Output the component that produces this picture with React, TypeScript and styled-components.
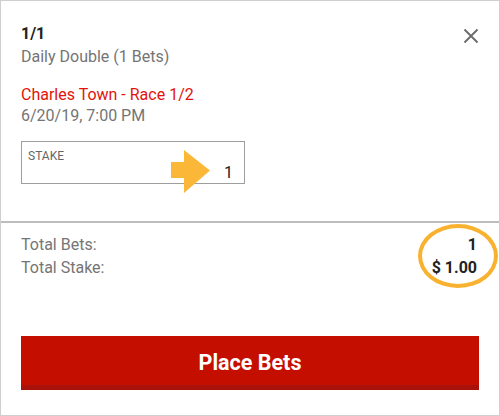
import React from 'react'
import styled, { createGlobalStyle } from 'styled-components'

const GlobalStyle = createGlobalStyle`
  html, body {
    margin: 0;
    padding: 0;
    background: #fff;
  }
  body {
    font-family: Roboto, 'Noto Sans', 'Liberation Sans', sans-serif;
    -webkit-font-smoothing: antialiased;
  }
`

const Slip = styled.div`
  position: relative;
  width: 500px;
  height: 416px;
  box-sizing: border-box;
  border: 1px solid #cfcfcf;
  display: flex;
  flex-direction: column;
  overflow: hidden;
`

const Details = styled.section`
  position: relative;
  padding: 23px 20px 37px 20px;
`

const Title = styled.div`
  font-size: 16px;
  line-height: 20px;
  font-weight: 700;
  color: #222;
`

const Muted = styled.div`
  font-size: 16px;
  line-height: 21px;
  color: #757575;
  margin-top: ${(p: { $gap?: number }) => p.$gap ?? 0}px;
`

const Race = styled.div`
  font-size: 16px;
  line-height: 21px;
  color: #e2130c;
  margin-top: 17px;
`

const CloseButton = styled.button`
  position: absolute;
  top: 26px;
  right: 19px;
  width: 18px;
  height: 18px;
  padding: 0;
  border: none;
  background: none;
  cursor: pointer;
  display: flex;
  align-items: center;
  justify-content: center;
`

const StakeBox = styled.div`
  position: relative;
  margin-top: 15px;
  width: 224px;
  height: 43px;
  box-sizing: border-box;
  border: 1px solid #9e9e9e;
  padding: 7px 11px 0 6px;
  display: flex;
  flex-direction: column;
`

const StakeLabel = styled.div`
  font-size: 12px;
  line-height: 14px;
  color: #666;
`

const StakeValue = styled.div`
  font-size: 16px;
  line-height: 18px;
  color: #222;
  text-align: right;
  margin-top: 1px;
`

const Arrow = styled.svg`
  position: absolute;
  left: 149px;
  top: 8px;
`

const Divider = styled.hr`
  margin: 0;
  border: none;
  height: 2px;
  background: #bdbdbd;
`

const Totals = styled.section`
  position: relative;
  padding: 10px 22px 0 20px;
  display: grid;
  grid-template-columns: 1fr auto;
`

const TotalLabel = styled.div`
  font-size: 16px;
  line-height: 23px;
  color: #757575;
`

const TotalValue = styled.div`
  font-size: 16px;
  line-height: 23px;
  font-weight: 700;
  color: #222;
  text-align: right;
`

const Ring = styled.div`
  position: absolute;
  left: 417px;
  top: 1px;
  width: 80px;
  height: 64px;
  box-sizing: border-box;
  border: 4px solid #f9b22f;
  border-radius: 50%;
`

const Footer = styled.div`
  margin-top: auto;
  padding: 0 20px 25px 20px;
`

const PlaceButton = styled.button`
  width: 100%;
  height: 54px;
  border: none;
  background: #c40f00;
  box-shadow: inset 0 -5px 0 #a9110b;
  color: #fff;
  font-family: Roboto, 'Noto Sans', 'Liberation Sans', sans-serif;
  font-size: 21.5px;
  font-weight: 700;
  padding: 0 0 2px 0;
  cursor: pointer;
`

export default function App() {
  return (
    <>
      <GlobalStyle />
      <Slip>
        <Details>
          <Title>1/1</Title>
          <Muted $gap={2}>Daily Double (1 Bets)</Muted>
          <Race>Charles Town - Race 1/2</Race>
          <Muted>6/20/19, 7:00 PM</Muted>
          <CloseButton aria-label="Close">
            <svg width="16" height="16" viewBox="0 0 16 16">
              <path d="M1.5 1.5 L14.5 14.5 M14.5 1.5 L1.5 14.5" stroke="#6b6b6b" strokeWidth="1.9" />
            </svg>
          </CloseButton>
          <StakeBox>
            <StakeLabel>STAKE</StakeLabel>
            <StakeValue>1</StakeValue>
            <Arrow width="40" height="44" viewBox="0 0 40 44">
              <path d="M0 12 L13 12 L13 0 L39 20.5 L13 43 L13 28 L0 28 Z" fill="#fbb738" />
            </Arrow>
          </StakeBox>
        </Details>
        <Divider />
        <Totals>
          <TotalLabel>Total Bets:</TotalLabel>
          <TotalValue>1</TotalValue>
          <TotalLabel>Total Stake:</TotalLabel>
          <TotalValue>$ 1.00</TotalValue>
          <Ring />
        </Totals>
        <Footer>
          <PlaceButton>Place Bets</PlaceButton>
        </Footer>
      </Slip>
    </>
  )
}
